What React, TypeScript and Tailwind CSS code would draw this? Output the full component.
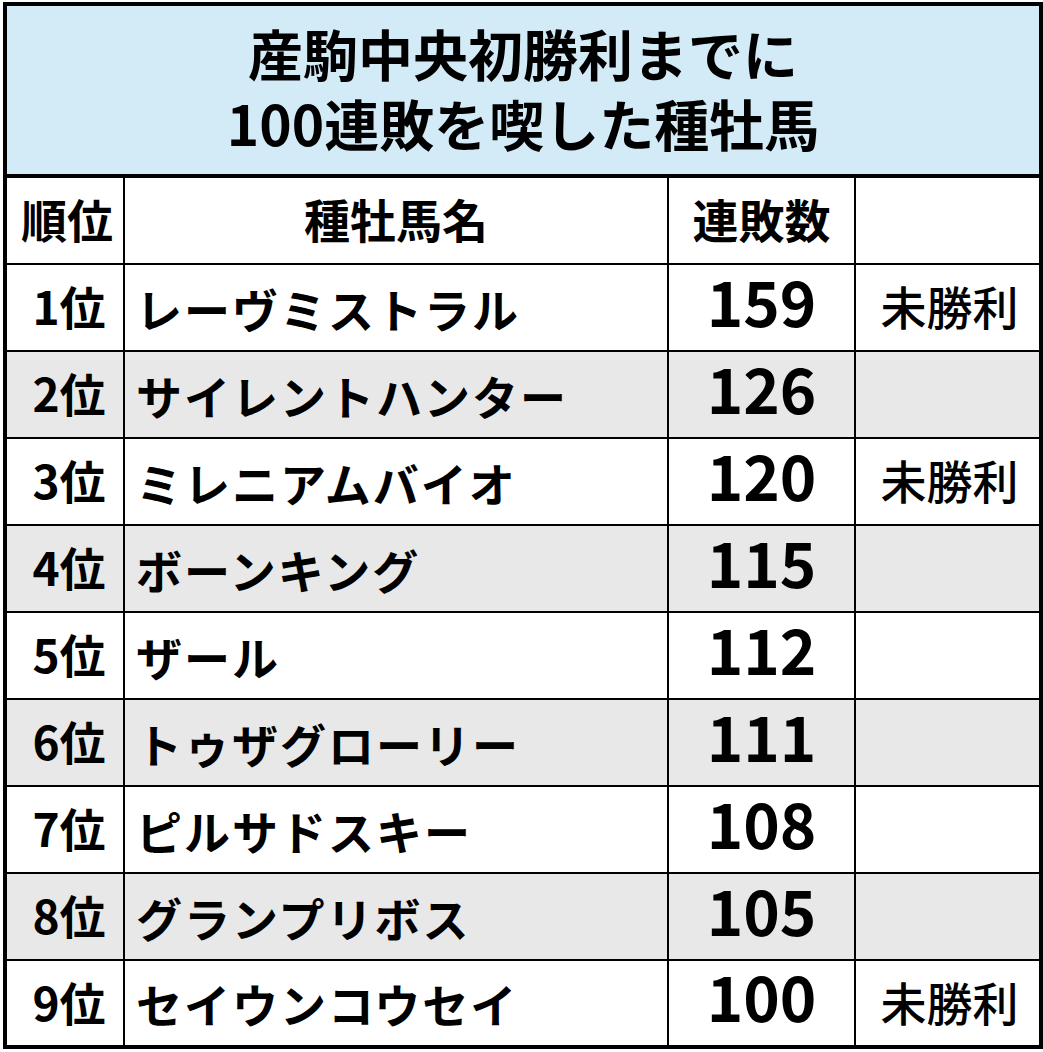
// == Stallion losing-streak ranking table == //

type Row = {
  rank: string;
  name: string;
  streak: number;
  note?: string;
};

const rows: Row[] = [
  { rank: "1位", name: "レーヴミストラル", streak: 159, note: "未勝利" },
  { rank: "2位", name: "サイレントハンター", streak: 126 },
  { rank: "3位", name: "ミレニアムバイオ", streak: 120, note: "未勝利" },
  { rank: "4位", name: "ボーンキング", streak: 115 },
  { rank: "5位", name: "ザール", streak: 112 },
  { rank: "6位", name: "トゥザグローリー", streak: 111 },
  { rank: "7位", name: "ピルサドスキー", streak: 108 },
  { rank: "8位", name: "グランプリボス", streak: 105 },
  { rank: "9位", name: "セイウンコウセイ", streak: 100, note: "未勝利" },
];

const font = { fontFamily: '"Noto Sans CJK JP", "Noto Sans", sans-serif' };

export default function App() {
  return (
    <div className="min-h-[1052px] w-[1043px] bg-white pl-[3px] pt-[2px] text-black" style={font}>
      <div className="w-[1040px] border-4 border-black">
        {/* == Title == */}
        <div className="flex h-[172px] flex-col items-center justify-center border-b-4 border-black bg-[#d3eaf7] pb-[6px] text-[55px] font-bold leading-[70px]">
          <p>産駒中央初勝利までに</p>
          <p>100連敗を喫した種牡馬</p>
        </div>

        {/* == Header == */}
        <div className="flex h-[85px] text-[46px] font-bold leading-none">
          <div className="flex w-[116px] shrink-0 items-center justify-center pb-[5px] pl-1">順位</div>
          <div className="flex w-[544px] shrink-0 items-center justify-center border-l-2 border-black pb-[5px]">
            種牡馬名
          </div>
          <div className="flex w-[187px] shrink-0 items-center justify-center border-l-2 border-black pb-[5px]">
            連敗数
          </div>
          <div className="w-[185px] shrink-0 border-l-2 border-black" />
        </div>

        {/* == Rows == */}
        {rows.map((row, i) => (
          <div
            key={row.rank}
            className={`flex border-t-2 border-black leading-none ${
              i === rows.length - 1 ? "h-[86px]" : "h-[87px]"
            } ${i % 2 === 1 ? "bg-[#e8e8e8]" : "bg-white"}`}
          >
            <div className="flex w-[116px] shrink-0 items-center justify-center pb-[5px] pl-2 text-[46px] font-bold">
              {row.rank}
            </div>
            <div className="flex w-[544px] shrink-0 items-center border-l-2 border-black pl-[11px] text-[46px] font-bold tracking-[2px]">
              {row.name}
            </div>
            <div className="flex w-[187px] shrink-0 items-center justify-center border-l-2 border-black pb-[16px] text-[62px] font-bold">
              {row.streak}
            </div>
            <div className="flex w-[185px] shrink-0 items-center justify-center border-l-2 border-black pb-[5px] pl-1 text-[46px] font-medium">
              {row.note}
            </div>
          </div>
        ))}
      </div>
    </div>
  );
}
